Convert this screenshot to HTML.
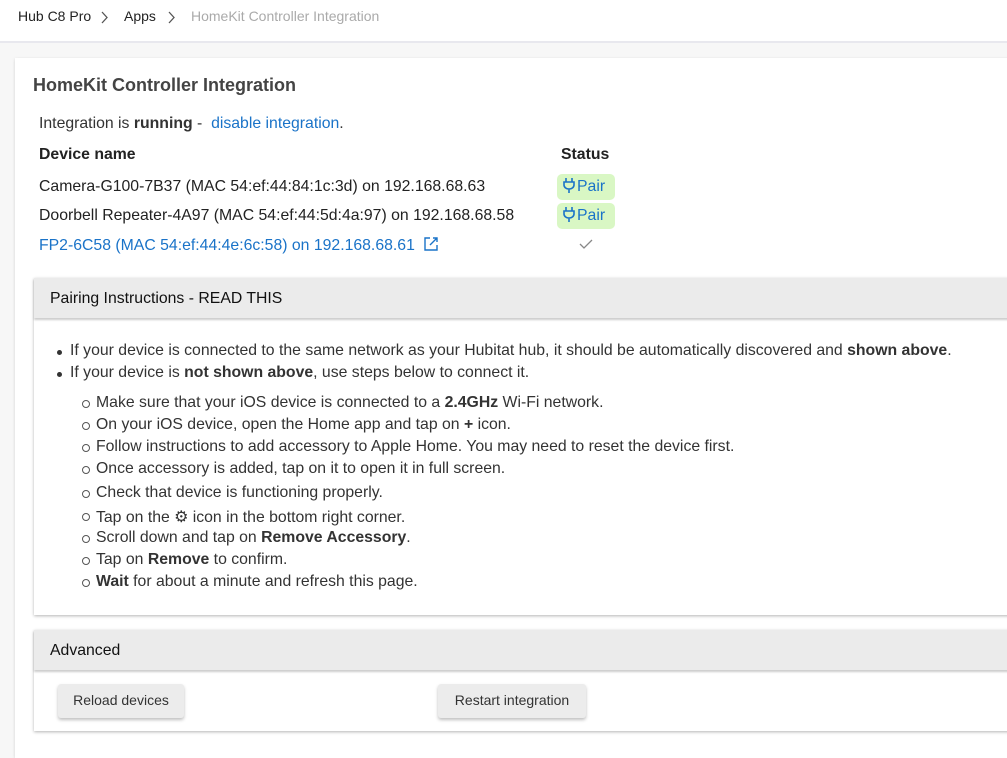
<!DOCTYPE html>
<html><head><style>
*{box-sizing:border-box}
body{margin:0;width:1007px;height:749px;overflow:hidden;background:#f7f7f7;font-family:"Liberation Sans",sans-serif;color:#333;font-size:15.8px}
.top{position:absolute;left:0;top:0;width:1007px;height:43px;background:#fff;border-bottom:2px solid #e8e8ee}
.bc{position:absolute;top:8px;font-size:14px;color:#222}
.card{position:absolute;left:15px;top:58px;width:1010px;height:700px;background:#fff;box-shadow:0 1px 3px rgba(0,0,0,.15)}
.t{position:absolute;white-space:nowrap}
a{color:#1a73c8;text-decoration:none}
.pair{position:absolute;left:557px;width:58px;height:26px;background:#d9f7c4;border-radius:5px;color:#1a73c8;font-size:15.8px;padding:3px 0 0 6px}
.pair svg{margin-right:2px}
.panel{position:absolute;left:34px;width:990px;background:#fff;box-shadow:0 1px 3px rgba(0,0,0,.3)}
.ph{height:40px;background:#ebebeb;box-shadow:0 2px 2px rgba(0,0,0,.2);padding:12px 16px;font-size:15.8px;color:#111}
.btn{position:absolute;top:684px;height:34px;background:#ececec;border-radius:3px;box-shadow:0 2px 3px rgba(0,0,0,.25);font-size:14px;color:#333;text-align:center;padding-top:8px}
ul{margin:0;padding:0;list-style:none}
.l1{position:absolute;left:70px}
.l1 li{position:relative;height:22px}
.l1 li:before{content:"";position:absolute;left:-13px;top:8px;width:5px;height:5px;border-radius:50%;background:#333}
.l2 li{position:absolute;left:96px;white-space:nowrap}
.l2 li:before{content:"";position:absolute;left:-14px;top:6px;width:6px;height:6px;border-radius:50%;border:1px solid #555}
</style></head><body>
<div class="top">
<span class="bc" style="left:18px">Hub C8 Pro</span>
<svg style="position:absolute;left:100px;top:11px" width="9" height="13" viewBox="0 0 9 13"><path d="M2 1l5 5.5L2 12" fill="none" stroke="#555" stroke-width="1.3"/></svg>
<span class="bc" style="left:124px">Apps</span>
<svg style="position:absolute;left:167px;top:11px" width="9" height="13" viewBox="0 0 9 13"><path d="M2 1l5 5.5L2 12" fill="none" stroke="#555" stroke-width="1.3"/></svg>
<span class="bc" style="left:191px;color:#aaa">HomeKit Controller Integration</span>
</div>
<div class="card"></div>
<div class="t" style="left:33px;top:75px;font-size:18px;font-weight:bold;color:#444">HomeKit Controller Integration</div>
<div class="t" style="left:39px;top:115px">Integration is <b>running</b> - &nbsp;<a>disable integration</a>.</div>
<div class="t" style="left:39px;top:146px;font-weight:bold;color:#222">Device name</div>
<div class="t" style="left:561px;top:146px;font-weight:bold;color:#222">Status</div>
<div class="t" style="left:39px;top:178px;color:#222">Camera-G100-7B37 (MAC 54:ef:44:84:1c:3d) on 192.168.68.63</div>
<div class="t" style="left:39px;top:207px;color:#222">Doorbell Repeater-4A97 (MAC 54:ef:44:5d:4a:97) on 192.168.68.58</div>
<div class="t" style="left:39px;top:236px"><a>FP2-6C58 (MAC 54:ef:44:4e:6c:58) on 192.168.68.61</a>
<svg width="16" height="16" viewBox="0 0 16 16" style="vertical-align:-2px;margin-left:4px"><path d="M7 2H2v12h12V9M10 2h4v4M14 2L7 9" fill="none" stroke="#1a73c8" stroke-width="1.4"/></svg></div>
<div class="pair" style="top:174px"><svg width="12" height="16" viewBox="0 0 12 16" style="vertical-align:-2px"><path d="M3 1v4M9 1v4M1 5h10v3a5 4 0 0 1-10 0zM6 12v4" fill="none" stroke="#1a73c8" stroke-width="1.6"/></svg>Pair</div>
<div class="pair" style="top:203px"><svg width="12" height="16" viewBox="0 0 12 16" style="vertical-align:-2px"><path d="M3 1v4M9 1v4M1 5h10v3a5 4 0 0 1-10 0zM6 12v4" fill="none" stroke="#1a73c8" stroke-width="1.6"/></svg>Pair</div>
<svg style="position:absolute;left:579px;top:238px" width="14" height="12" viewBox="0 0 14 12"><path d="M1 6l4 4 8-8" fill="none" stroke="#888" stroke-width="1.3"/></svg>

<div class="panel" style="top:278px;height:337px"><div class="ph">Pairing Instructions - READ THIS</div></div>
<ul class="l1" style="top:342px">
<li>If your device is connected to the same network as your Hubitat hub, it should be automatically discovered and <b>shown above</b>.</li>
<li>If your device is <b>not shown above</b>, use steps below to connect it.</li>
</ul>
<ul class="l2">
<li style="top:394px">Make sure that your iOS device is connected to a <b>2.4GHz</b> Wi-Fi network.</li>
<li style="top:416px">On your iOS device, open the Home app and tap on <b>+</b> icon.</li>
<li style="top:438px">Follow instructions to add accessory to Apple Home. You may need to reset the device first.</li>
<li style="top:460px">Once accessory is added, tap on it to open it in full screen.</li>
<li style="top:484px">Check that device is functioning properly.</li>
<li style="top:507px">Tap on the ⚙ icon in the bottom right corner.</li>
<li style="top:529px">Scroll down and tap on <b>Remove Accessory</b>.</li>
<li style="top:551px">Tap on <b>Remove</b> to confirm.</li>
<li style="top:573px"><b>Wait</b> for about a minute and refresh this page.</li>
</ul>

<div class="panel" style="top:630px;height:101px"><div class="ph">Advanced</div></div>
<div class="btn" style="left:58px;width:126px">Reload devices</div>
<div class="btn" style="left:438px;width:148px">Restart integration</div>
</body></html>
